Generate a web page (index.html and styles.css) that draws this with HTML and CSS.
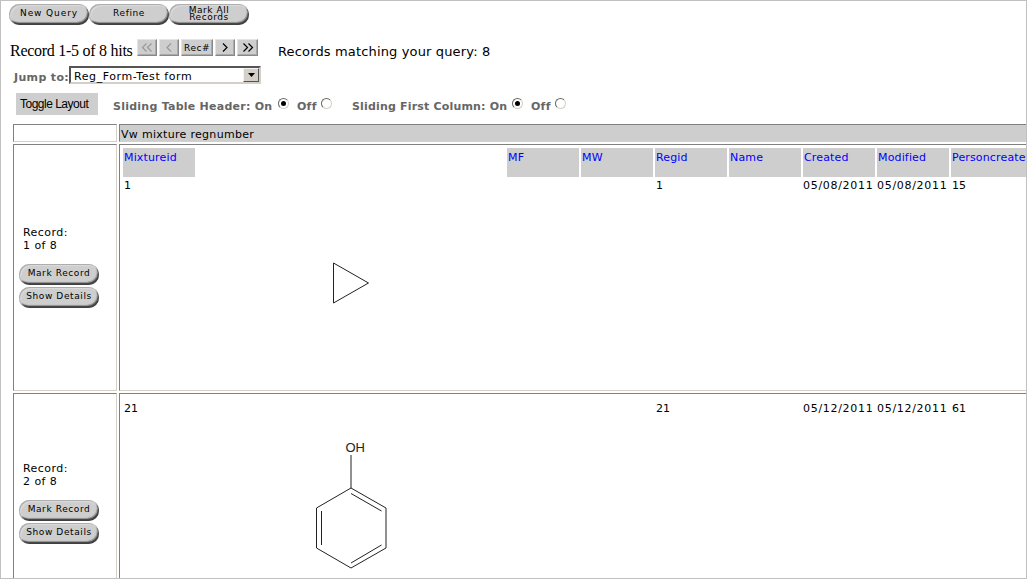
FILE: index.html
```html
<!DOCTYPE html>
<html lang="en">
<head>
<meta charset="utf-8">
<title>Query results</title>
<link rel="stylesheet" href="styles.css">
</head>
<body>
<main class="page">
  <nav class="actions">
    <button class="pill query">New Query</button><button class="pill refine">Refine</button><button class="pill two-line">Mark All<br>Records</button>
  </nav>
  <div class="pager">
    <span class="hits">Record 1-5 of 8 hits</span>
    <button class="step off" aria-label="First"><svg width="12" height="9" viewBox="0 0 12 9"><path d="M5.500 .5l-4 4 4 4M10.500 .5l-4 4 4 4"/></svg></button>
    <button class="step off" aria-label="Previous"><svg width="6" height="9" viewBox="0 0 6 9"><path d="M5 .5l-4 4 4 4"/></svg></button>
    <button class="step rec">Rec#</button>
    <button class="step" aria-label="Next"><svg width="6" height="9" viewBox="0 0 6 9"><path d="M1 .5l4 4-4 4"/></svg></button>
    <button class="step last" aria-label="Last"><svg width="12" height="9" viewBox="0 0 12 9"><path d="M1.500 .5l4 4-4 4M6.500 .5l4 4-4 4"/></svg></button>
    <span class="matching">Records matching your query: 8</span>
  </div>
  <div class="jump">
    <span class="label">Jump to:</span>
    <div class="select"><span>Reg_Form-Test form</span><i><svg width="7" height="4" viewBox="0 0 7 4"><path d="M0 0h7L3.500 4z"/></svg></i></div>
  </div>
  <div class="options">
    <button class="toggle">Toggle Layout</button>
    <span class="label header-opt">Sliding Table Header: On</span><i class="radio on"></i>
    <span class="label off-opt">Off</span><i class="radio"></i>
    <span class="label column-opt">Sliding First Column: On</span><i class="radio on"></i>
    <span class="label off-opt">Off</span><i class="radio"></i>
  </div>
  <section class="grid">
    <div class="cell"></div>
    <div class="cell group">Vw mixture regnumber</div>
    <div class="cell side">
      <p>Record:<br>1 of 8</p>
      <button class="pill mark">Mark Record</button><button class="pill details">Show Details</button>
    </div>
    <div class="cell record first">
      <div class="cols heads">
        <a>Mixtureid</a><span></span><a>MF</a><a>MW</a><a>Regid</a><a>Name</a><a>Created</a><a>Modified</a><a>Personcreate</a>
      </div>
      <div class="cols values">
        <span>1</span><span></span><span></span><span></span><span>1</span><span></span><span class="date">05/08/2011</span><span class="date">05/08/2011</span><span>15</span>
      </div>
      <svg class="triangle" width="40" height="44" viewBox="0 0 40 44"><path d="M2.500 2v40L37.500 22z"/></svg>
    </div>
    <div class="cell side lower">
      <p>Record:<br>2 of 8</p>
      <button class="pill mark">Mark Record</button><button class="pill details">Show Details</button>
    </div>
    <div class="cell record second">
      <div class="cols values">
        <span>21</span><span></span><span></span><span></span><span>21</span><span></span><span class="date">05/12/2011</span><span class="date">05/12/2011</span><span>61</span>
      </div>
      <svg class="phenol" width="80" height="134" viewBox="0 0 80 134"><path d="M41 17V50L76 70V110L41 130L6.500 110V70L41 50M41 55.500L71.500 73M71.500 107L41 125M11.500 107V73"/><text x="35.500" y="13.500">OH</text></svg>
    </div>
  </section>
</main>
</body>
</html>
```
FILE: styles.css
```css
* { box-sizing: border-box; }
body { margin: 0; background: #fff; }
button { margin: 0; color: #000; }
.page {
  width: 1027px; height: 579px; overflow: hidden;
  border: 1px solid #c0c0c0; background: #fff;
  font: 11px/13px "DejaVu Sans", Verdana, sans-serif; color: #000;
  white-space: nowrap;
}
.actions { display: flex; padding: 3px 0 0 8px; height: 36px; }
.pill {
  width: 80px; height: 21px; padding: 0 0 2px; flex: none;
  border: 0; border-radius: 11px;
  background: #cecece;
  box-shadow: inset 1px 1px 1px #a8a8a8, inset 2px 2px 1px #e2e2e2, inset -1px -2px 1px #404040, inset -2px -3px 1px #999;
  font: 9px/11px "DejaVu Sans", Verdana, sans-serif;
  letter-spacing: .6px;
}
.query { letter-spacing: .9px; }
.two-line { line-height: 7px; padding-bottom: 1px; letter-spacing: .55px; }
.pager { display: flex; align-items: center; gap: 2px; height: 22px; padding-left: 9px; margin-top: -1px; }
.hits { width: 125px; font: 16px/20px "Liberation Serif", "Times New Roman", serif; letter-spacing: -.27px; padding-top: 7px; }
.step {
  display: flex; align-items: center; justify-content: center;
  width: 20px; height: 17px; padding: 0;
  align-self: flex-start; margin-top: 3px;
  border: 1px solid; border-color: #e4e4e4 #888 #888 #e4e4e4;
  box-shadow: inset -1px -1px #aaa;
  background: #cecece;
}
.step svg { fill: none; stroke: #000; stroke-width: 1.2; }
.step.off svg { stroke: #999; }
.step.rec { width: 32px; font: 9px/12px "DejaVu Sans", Verdana, sans-serif; letter-spacing: .5px; }
.step.last { width: 21px; }
.matching { margin-left: 18px; padding-top: 9px; font-size: 13px; line-height: 16px; letter-spacing: .15px; }
.jump { display: flex; height: 34px; padding: 8px 0 0 13px; }
.label { font-weight: bold; color: #666; letter-spacing: .25px; }
.jump .label { width: 55px; padding-top: 5px; letter-spacing: .35px; }
.select {
  display: flex; justify-content: space-between;
  width: 192px; height: 18px; padding-left: 3px;
  border: 2px solid; border-color: #555 #d4d0c8 #d4d0c8 #555;
  line-height: 17px; letter-spacing: .58px;
}
.select i {
  display: flex; align-items: center; justify-content: center;
  width: 16px; height: 14px; border: 1px solid;
  border-color: #f4f4f4 #555 #555 #f4f4f4; background: #d4d0c8;
}
.options { display: flex; height: 32px; padding: 1px 0 0 15px; }
.toggle {
  width: 82px; height: 22px; padding: 0 0 0 4px; border: 0; background: #cecece;
  font: 12px/20px "Liberation Sans", Arial, sans-serif; text-align: left; letter-spacing: -.5px;
}
.options .label { padding-top: 7px; }
.header-opt { width: 165px; margin-left: 15px; }
.off-opt { width: 24px; margin-left: 8px; }
.column-opt { width: 160px; margin-left: 20px; }
.options .column-opt { letter-spacing: .18px; }
.radio {
  display: flex; align-items: center; justify-content: center;
  width: 11px; height: 11px; margin-top: 5px; border-radius: 50%;
  border: 1px solid; border-color: #666 #d4d0c8 #d4d0c8 #666;
}
.radio.on::before { content: ""; width: 5px; height: 5px; border-radius: 50%; background: #000; }
.grid {
  display: grid; grid-template-columns: 104px 1300px; grid-template-rows: 18px 247px 247px;
  gap: 2px; padding-left: 12px;
}
.cell { border: 1px solid; border-color: #808080 #d4d0c8 #d4d0c8 #808080; }
.group { background: #cecece; padding: 3px 0 0 1px; letter-spacing: .3px; }
.side { padding: 81px 0 0 5px; }
.lower { padding-top: 68px; }
.side p { margin: 0 0 12px 4px; letter-spacing: .45px; }
.side .pill { display: block; margin-bottom: 2px; }
.record { padding: 3px; }
.cols { display: grid; grid-template-columns: 72px 308px repeat(7, 72px); column-gap: 2px; }
.heads > * { height: 29px; padding: 3px 0 0 1px; }
.heads a { background: #cecece; color: #00f; letter-spacing: .15px; }
.heads a:last-child { width: 90px; }
.values { padding-top: 2px; }
.values > * { padding-left: 1px; }
.values .date { padding-left: 0; letter-spacing: .7px; }
.second .values { padding-top: 5px; }
.triangle { display: block; margin: 69px 0 0 208px; fill: none; stroke: #222; stroke-width: 1; }
.phenol { display: block; margin: 23px 0 0 187px; }
.phenol path { fill: none; stroke: #222; stroke-width: 1; }
.phenol text { font: 13px "Liberation Sans", Arial, sans-serif; fill: #222; }
```
